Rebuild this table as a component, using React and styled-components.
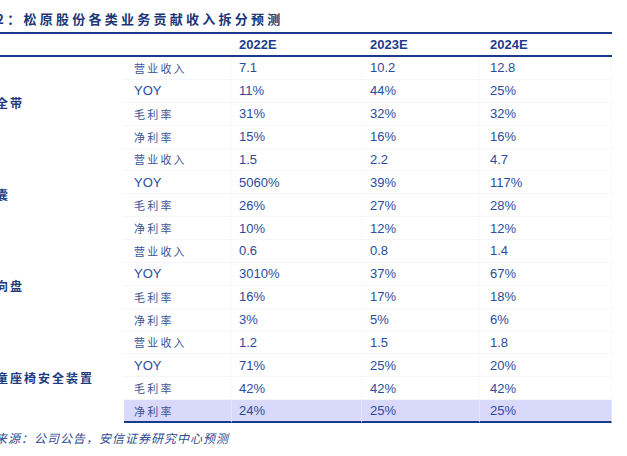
import React from "react";
import styled, { createGlobalStyle } from "styled-components";

const GlobalStyle = createGlobalStyle`
  html, body {
    margin: 0;
    padding: 0;
    background: #fff;
    overflow: hidden;
  }
`

const Page = styled.div`
  width: 632px;
  margin-left: -20px;
  padding-top: 10px;
  font-family: "Liberation Sans", "Noto Sans CJK SC", sans-serif;
`

const Title = styled.div`
  height: 22px;
  font-family: "Noto Sans CJK SC", sans-serif;
  font-weight: 700;
  font-size: 13px;
  line-height: 18px;
  letter-spacing: 3.25px;
  color: #1c3677;
  white-space: nowrap;
`

const HeaderRow = styled.div`
  display: grid;
  grid-template-columns: 144px 108px 130px 118px 132px;
  height: 21px;
  border-top: 2px solid #1b3a8b;
  border-bottom: 2px solid #1b3a8b;
  box-sizing: content-box;
`

const HeadCell = styled.div`
  display: flex;
  align-items: center;
  padding-left: ${p => p.$pad || 0}px;
  font-weight: 700;
  font-size: 13px;
  color: #1d3c8c;
`

const Body = styled.div`
  display: grid;
  grid-template-columns: 144px 108px 130px 118px 132px;
  grid-auto-rows: 22.875px;
`

const Category = styled.div`
  grid-column: 1;
  display: flex;
  align-items: center;
  padding-left: 2px;
  font-family: "Noto Sans CJK SC", sans-serif;
  font-weight: 700;
  font-size: 12px;
  letter-spacing: 2px;
  color: #1f3a80;
  white-space: nowrap;
`

const Cell = styled.div`
  display: flex;
  align-items: center;
  box-sizing: border-box;
  padding-left: ${p => p.$pad}px;
  border-bottom: ${p => (p.$last ? "2px solid #1b3a8b" : "1px solid #f5f6fa")};
  border-right: 1px solid ${p => (p.$last ? "#e4e4fc" : "#f9f9fc")};
  background: ${p => (p.$last ? "#d9d9fb" : "transparent")};
  font-size: 13px;
  color: #2b4c9b;
  white-space: nowrap;
`

const Label = styled.span`
  font-family: ${p => (p.$latin ? '"Liberation Sans", sans-serif' : '"Noto Sans CJK SC", sans-serif')};
  font-size: ${p => (p.$latin ? 13 : 11)}px;
  letter-spacing: ${p => (p.$latin ? 0 : 2.2)}px;
  color: ${p => (p.$latin ? "#2b4c9b" : "#3d5597")};
`

const Source = styled.div`
  margin-left: -11px;
  height: 28px;
  display: flex;
  align-items: center;
  font-family: "Noto Sans CJK SC", sans-serif;
  font-style: italic;
  font-size: 12px;
  letter-spacing: 1px;
  color: #2d4a94;
  white-space: nowrap;
`

const groups = [
  {
    name: "安全带",
    rows: [
      ["营业收入", "7.1", "10.2", "12.8"],
      ["YOY", "11%", "44%", "25%"],
      ["毛利率", "31%", "32%", "32%"],
      ["净利率", "15%", "16%", "16%"],
    ],
  },
  {
    name: "气囊",
    rows: [
      ["营业收入", "1.5", "2.2", "4.7"],
      ["YOY", "5060%", "39%", "117%"],
      ["毛利率", "26%", "27%", "28%"],
      ["净利率", "10%", "12%", "12%"],
    ],
  },
  {
    name: "方向盘",
    rows: [
      ["营业收入", "0.6", "0.8", "1.4"],
      ["YOY", "3010%", "37%", "67%"],
      ["毛利率", "16%", "17%", "18%"],
      ["净利率", "3%", "5%", "6%"],
    ],
  },
  {
    name: "儿童座椅安全装置",
    rows: [
      ["营业收入", "1.2", "1.5", "1.8"],
      ["YOY", "71%", "25%", "20%"],
      ["毛利率", "42%", "42%", "42%"],
      ["净利率", "24%", "25%", "25%"],
    ],
  },
];

const pads = [10, 7, 8, 10];

const App = () => {
  return (
    <Page>
      <GlobalStyle />
      <Title>表2：松原股份各类业务贡献收入拆分预测</Title>
      <HeaderRow>
        <HeadCell />
        <HeadCell />
        <HeadCell $pad={7}>2022E</HeadCell>
        <HeadCell $pad={8}>2023E</HeadCell>
        <HeadCell $pad={10}>2024E</HeadCell>
      </HeaderRow>
      <Body>
        {groups.map((g, gi) => (
          <React.Fragment key={g.name}>
            <Category style={{ gridRow: `${gi * 4 + 1} / span 4` }}>{g.name}</Category>
            {g.rows.map((row, ri) => {
              const last = gi === groups.length - 1 && ri === g.rows.length - 1;
              return row.map((v, ci) => (
                <Cell
                  key={`${ri}-${ci}`}
                  $pad={pads[ci]}
                  $last={last}
                  style={{ gridRow: gi * 4 + ri + 1, gridColumn: ci + 2 }}
                >
                  {ci === 0 ? <Label $latin={v === "YOY"}>{v}</Label> : v}
                </Cell>
              ));
            })}
          </React.Fragment>
        ))}
      </Body>
      <Source>资料来源：公司公告，安信证券研究中心预测</Source>
    </Page>
  );
};

export default App;
